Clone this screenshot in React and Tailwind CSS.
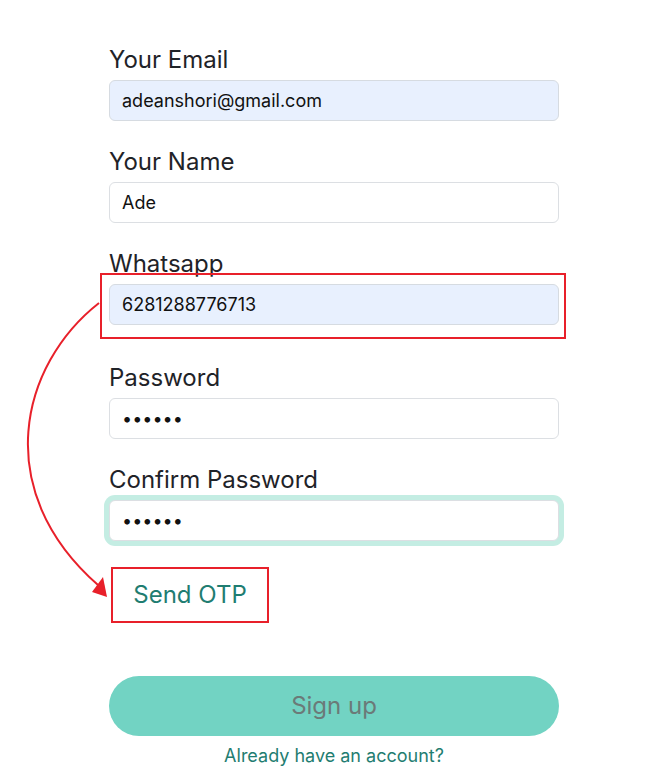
import React from 'react';

const FONT = { fontFamily: 'Inter, "Noto Sans", sans-serif' };

function Field({ label, value, type = 'text', autofill = false, focused = false, annotate = false }) {
  return (
    <div className="flex flex-col">
      <label className="text-[24px] leading-[30px] text-[#1f2328]">{label}</label>
      <div className="relative mt-[5px]">
        <input
          type={type}
          defaultValue={value}
          readOnly
          className={`block w-full h-[41px] rounded-md border px-[12px] text-[18px] text-[#111] outline-none ${
            autofill ? 'bg-[#e8f0fe] border-[#d6dbe1]' : 'bg-white border-[#dcdfe3]'
          } ${focused ? 'border-[#8fd9c8] ring-[5px] ring-[#c4ede3]' : ''}`}
        />
        {/* annotation box */}
        {annotate && (
          <div className="pointer-events-none absolute -left-[9px] -right-[7px] -top-[11px] -bottom-[14px] border-2 border-[#e8202a]" />
        )}
      </div>
    </div>
  );
}

export default function App() {
  return (
    <div className="relative w-[647px] h-[775px] bg-white overflow-hidden" style={FONT}>
      <div className="w-[450px] ml-[109px] pt-[45px] flex flex-col">
        <div className="flex flex-col gap-[26px]">
          <Field label="Your Email" value="adeanshori@gmail.com" autofill />
          <Field label="Your Name" value="Ade" />
          <div className="mb-[12px]">
            <Field label="Whatsapp" value="6281288776713" autofill annotate />
          </div>
          <Field label="Password" value="secret" type="password" />
          <Field label="Confirm Password" value="secret" type="password" focused />
        </div>

        <div className="mt-[26px] ml-[2px] self-start border-2 border-[#e8202a] h-[56px] w-[158px] flex items-center justify-center">
          <button className="text-[24px] text-[#1f7d71]">Send OTP</button>
        </div>

        <button className="mt-[53px] h-[60px] w-full rounded-full bg-[#72d3c3] text-[24px] text-[#6b7a78]">
          Sign up
        </button>
        <a className="mt-[6px] text-center text-[18px] text-[#1f7d71]">Already have an account?</a>
      </div>

      {/* annotation arrow */}
      <svg className="pointer-events-none absolute left-0 top-0" width="647" height="775" viewBox="0 0 647 775">
        <path d="M99 303 C 20 365, -10 490, 98 585" fill="none" stroke="#e8202a" strokeWidth="2" />
        <polygon points="107,597 92,592 103,577" fill="#e8202a" />
      </svg>
    </div>
  );
}
